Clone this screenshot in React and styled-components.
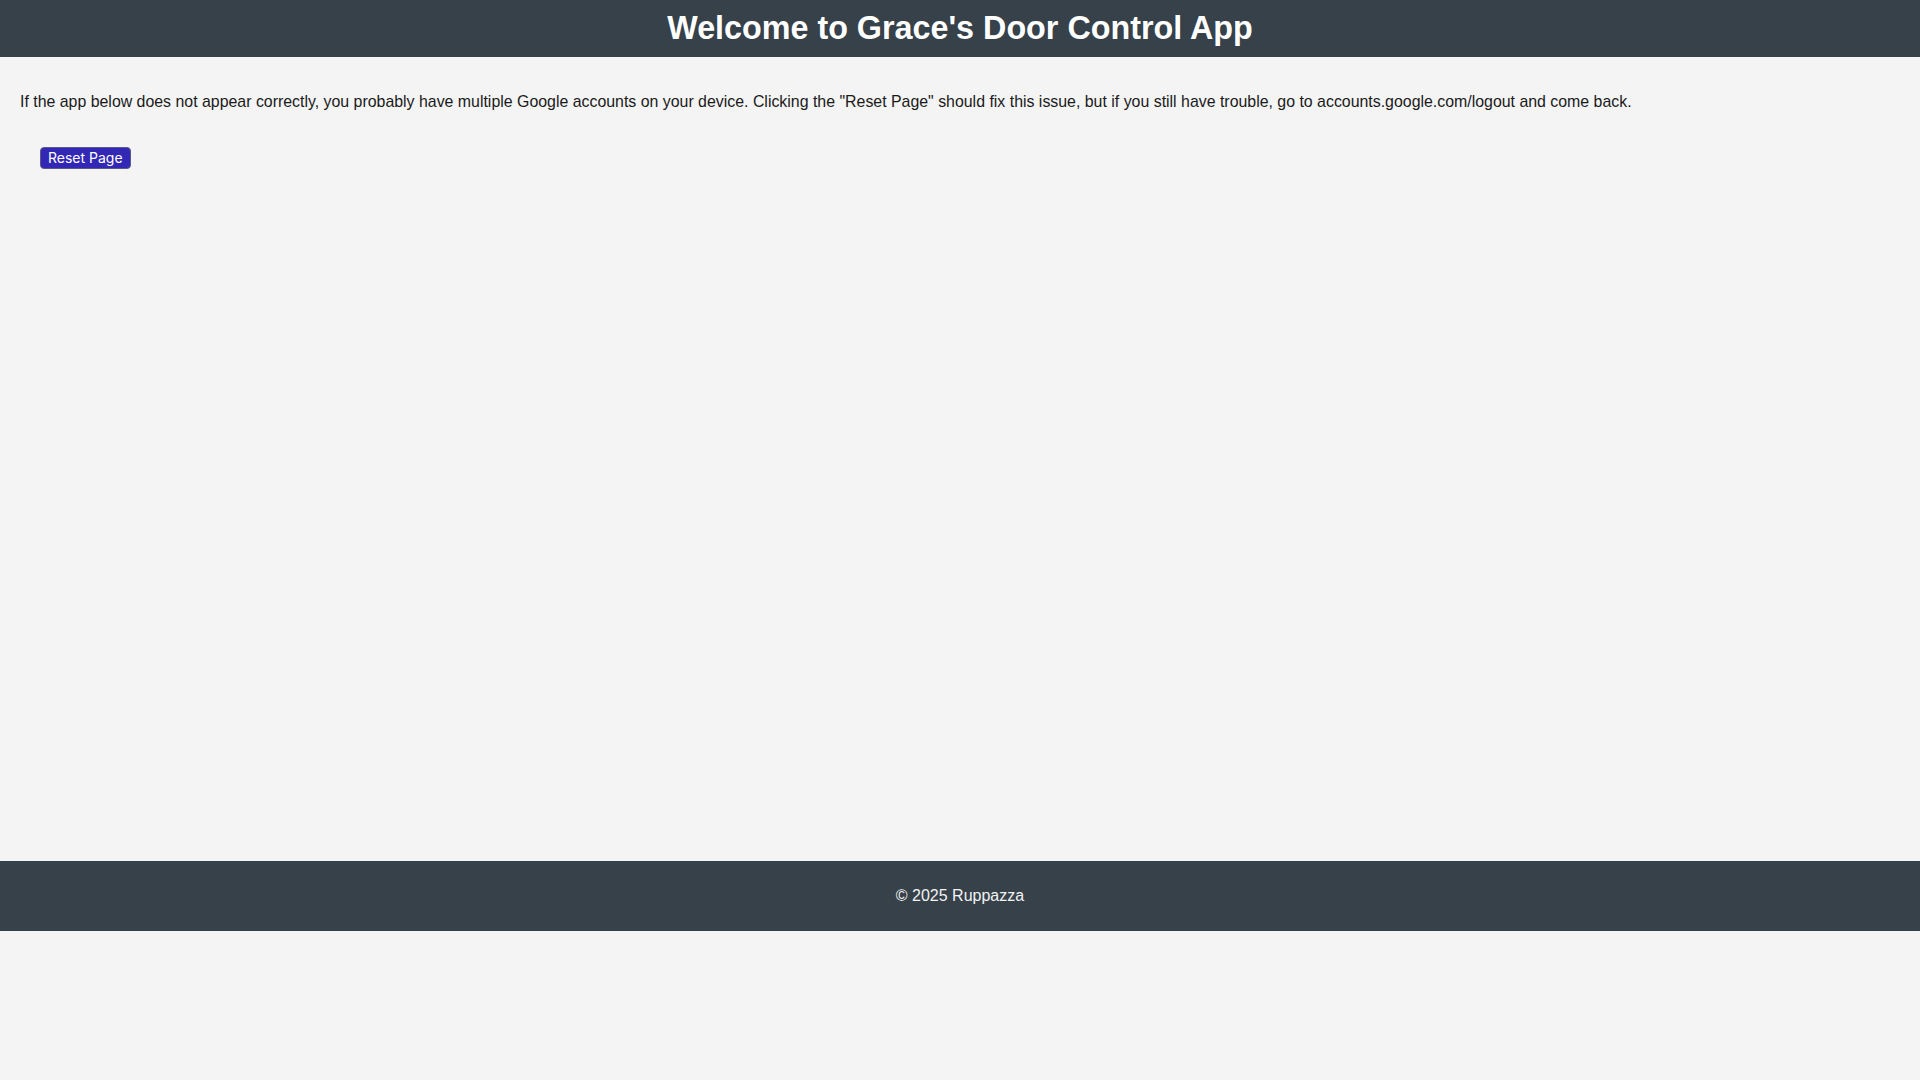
import React from 'react';
import styled, { createGlobalStyle } from 'styled-components';

const GlobalStyle = createGlobalStyle`
  html, body {
    margin: 0;
    padding: 0;
    background: #f4f4f4;
    font-family: 'Liberation Sans', Arial, sans-serif;
    color: #1a1a1a;
  }
`;

const Header = styled.header`
  background: #36414a;
  color: #ffffff;
  padding: 10px 0;
  text-align: center;
`;

const Title = styled.h1`
  margin: 0;
  font-size: 32.3px;
  font-weight: bold;
  line-height: 37px;
`;

const Main = styled.main`
  padding: 20px;
  height: 804px;
  box-sizing: border-box;
`;

const Notice = styled.p`
  margin: 16px 0;
  font-size: 15.9px;
  line-height: 18px;
`;

const ButtonRow = styled.div`
  padding: 20px 20px 0;
`;

const ResetButton = styled.button`
  height: 22px;
  padding: 0 7px;
  background: #3327b5;
  color: #ffffff;
  border: 1px solid #5b5a86;
  border-radius: 4px;
  font-family: Inter, 'Noto Sans', sans-serif;
  font-size: 14px;
  line-height: 20px;
  cursor: pointer;
`;

const Footer = styled.footer`
  background: #36414a;
  color: #f2f2f2;
  height: 70px;
  display: flex;
  align-items: center;
  justify-content: center;
  font-size: 16px;
`;

const App = () => {
  return (
    <>
      <GlobalStyle />
      <Header>
        <Title>Welcome to Grace's Door Control App</Title>
      </Header>
      <Main>
        <Notice>
          If the app below does not appear correctly, you probably have multiple Google accounts on your device. Clicking the "Reset Page" should fix this issue, but if you still have trouble, go to accounts.google.com/logout and come back.
        </Notice>
        <ButtonRow>
          <ResetButton type="button">Reset Page</ResetButton>
        </ButtonRow>
      </Main>
      <Footer>© 2025 Ruppazza</Footer>
    </>
  );
};

export default App;
